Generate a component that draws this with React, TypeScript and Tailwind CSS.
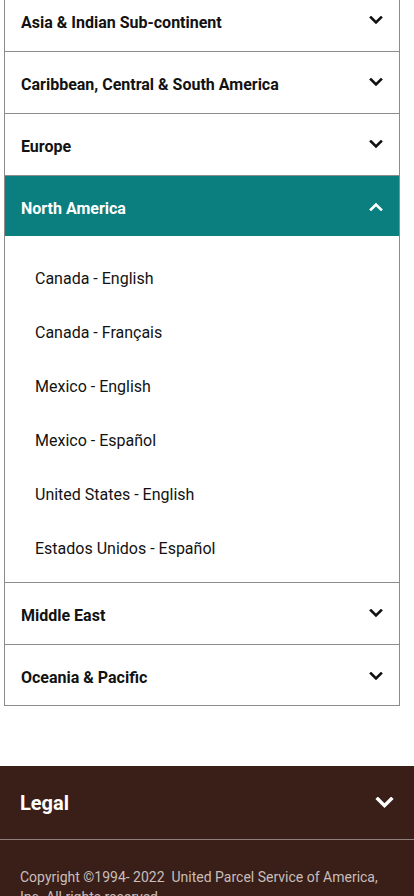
import React from 'react';

const Chevron: React.FC<{ up?: boolean; className?: string }> = ({ up, className }) => (
  <svg viewBox="0 0 14 9" className={className} fill="none" stroke="currentColor" strokeWidth={2.6} strokeLinecap="square">
    {up ? <path d="M2 7.5 7 2.5l5 5" /> : <path d="M2 1.5l5 5 5-5" />}
  </svg>
);

const regionsTop = ['Asia & Indian Sub-continent', 'Caribbean, Central & South America', 'Europe'];
const regionsBottom = ['Middle East', 'Oceania & Pacific'];
const northAmerica = [
  'Canada - English',
  'Canada - Français',
  'Mexico - English',
  'Mexico - Español',
  'United States - English',
  'Estados Unidos - Español',
];

const RegionRow: React.FC<{ label: string }> = ({ label }) => (
  <div className="flex h-[62px] items-center justify-between border-b border-[#8c8c8c] pl-4 pr-4 last:h-[60px] last:border-b-0 last:pt-0.5">
    <span className="pt-1 text-base font-bold text-[#121212]">{label}</span>
    <Chevron className="h-[9px] w-[14px] text-[#121212]" />
  </div>
);

export default function App() {
  return (
    <div className="min-h-[896px] bg-white" style={{ fontFamily: 'Roboto, "Noto Sans", sans-serif' }}>
      <div className="mx-1 -mt-[11px] w-[396px] border border-[#8c8c8c]">
        {regionsTop.map((r) => (
          <RegionRow key={r} label={r} />
        ))}
        <div className="border-b border-[#8c8c8c]">
          <div className="flex h-[60px] items-center justify-between bg-[#0b7f7f] px-4">
            <span className="pt-1.5 text-base font-bold text-white">North America</span>
            <Chevron up className="h-[9px] w-[14px] text-white" />
          </div>
          <ul className="pt-4 pb-[6px]">
            {northAmerica.map((c) => (
              <li key={c} className="flex h-[54px] items-center pl-[30px] text-base text-[#121212]">
                {c}
              </li>
            ))}
          </ul>
        </div>
        {regionsBottom.map((r) => (
          <RegionRow key={r} label={r} />
        ))}
      </div>
      <footer className="mt-[60px] bg-[#3a1e18]">
        <div className="flex h-[74px] items-center justify-between border-b border-[#8f807c] pl-5 pr-5">
          <span className="text-xl font-bold text-white">Legal</span>
          <Chevron className="h-[12px] w-[19px] text-white" />
        </div>
        <p className="px-5 pt-[27px] pb-6 text-sm leading-5 text-[#c8bebb]">
          Copyright ©1994- 2022&nbsp; United Parcel Service of America, Inc. All rights reserved.
        </p>
      </footer>
    </div>
  );
}
